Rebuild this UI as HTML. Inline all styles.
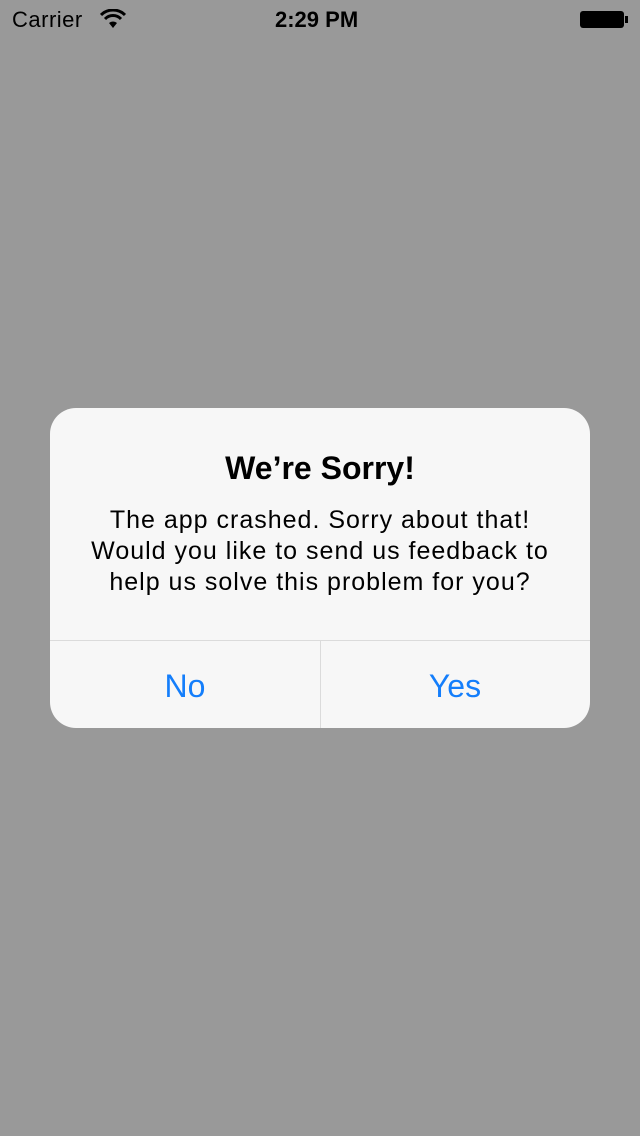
<!DOCTYPE html>
<html><head><style>
body{margin:0;width:640px;height:1136px;background:#999;font-family:"Liberation Sans",sans-serif;position:relative;overflow:hidden}
.sb{position:absolute;top:0;left:0;width:640px;height:40px;font-size:22px;color:#000}
.alert{position:absolute;left:50px;top:408px;width:540px;height:320px;background:#f7f7f7;border-radius:26px;overflow:hidden}
.t{position:absolute;top:42px;width:100%;text-align:center;font-weight:bold;font-size:32px}
.m{position:absolute;top:97px;width:100%;text-align:center;font-size:25px;line-height:31px;letter-spacing:1px}
.hl{position:absolute;top:232px;left:0;width:540px;height:1px;background:#dbdbdb}
.vl{position:absolute;top:232px;left:270px;width:1px;height:88px;background:#dbdbdb}
.b{position:absolute;top:260px;width:270px;text-align:center;font-size:32px;color:#147efb}
</style></head><body>
<div class="sb">
<span style="position:absolute;left:12px;top:7px;letter-spacing:0.5px">Carrier</span>
<svg style="position:absolute;left:100px;top:9px" width="26" height="20" viewBox="0 0 26 20"><path d="M13 19 L9 14 A6 6 0 0 1 17 14Z" fill="#000"/><path d="M5 10 A11 11 0 0 1 21 10" stroke="#000" stroke-width="3" fill="none"/><path d="M1 6 A17 17 0 0 1 25 6" stroke="#000" stroke-width="3" fill="none"/></svg>
<span style="position:absolute;left:275px;top:7px;font-weight:bold">2:29 PM</span>
<div style="position:absolute;left:580px;top:11px;width:44px;height:17px;background:#000;border-radius:3px"></div>
<div style="position:absolute;left:625px;top:16px;width:3px;height:7px;background:#000"></div>
</div>
<div class="alert">
<div class="t">We’re Sorry!</div>
<div class="m">The app crashed. Sorry about that!<br>Would you like to send us feedback to<br>help us solve this problem for you?</div>
<div class="hl"></div><div class="vl"></div>
<div class="b" style="left:0">No</div><div class="b" style="left:270px">Yes</div>
</div>
</body></html>
